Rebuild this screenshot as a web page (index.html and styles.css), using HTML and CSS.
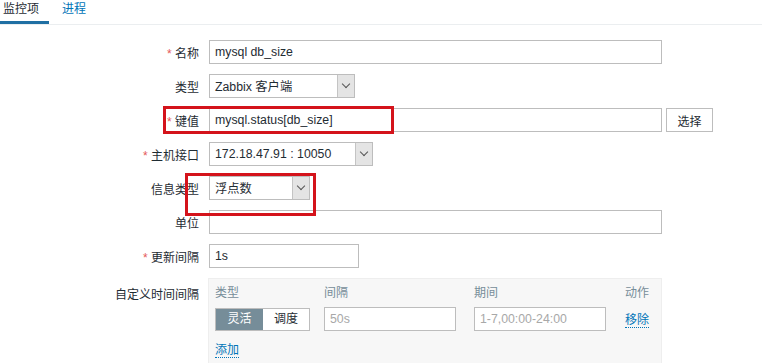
FILE: index.html
```html
<!DOCTYPE html>
<html lang="zh-CN">
<head>
    <meta charset="UTF-8">
    <title>监控项</title>
    <link rel="stylesheet" href="styles.css">
</head>
<body>
    <!-- Tabs -->
    <div class="tabs">
        <a class="tab active" href="#">监控项</a>
        <a class="tab" href="#">进程</a>
    </div>

    <div class="form">
        <div class="row">
            <label class="label"><span class="req">*</span> 名称</label>
            <input class="text wide" type="text" value="mysql db_size">
        </div>
        <div class="row">
            <label class="label">类型</label>
            <div class="select sel-type"><span>Zabbix 客户端</span><i class="arrow"></i></div>
        </div>
        <div class="row">
            <label class="label"><span class="req">*</span> 键值</label>
            <input class="text wide" type="text" value="mysql.status[db_size]">
            <button class="btn">选择</button>
        </div>
        <div class="row">
            <label class="label"><span class="req">*</span> 主机接口</label>
            <div class="select sel-iface"><span>172.18.47.91 : 10050</span><i class="arrow"></i></div>
        </div>
        <div class="row">
            <label class="label">信息类型</label>
            <div class="select sel-info"><span>浮点数</span><i class="arrow"></i></div>
        </div>
        <div class="row">
            <label class="label">单位</label>
            <input class="text wide" type="text" value="">
        </div>
        <div class="row">
            <label class="label"><span class="req">*</span> 更新间隔</label>
            <input class="text short" type="text" value="1s">
        </div>
        <div class="row top">
            <label class="label pad">自定义时间间隔</label>
            <div class="panel">
                <div class="grid">
                    <div class="head">类型</div>
                    <div class="head">间隔</div>
                    <div class="head">期间</div>
                    <div class="head">动作</div>

                    <div class="seg"><span class="on">灵活</span><span>调度</span></div>
                    <input class="text cell" type="text" placeholder="50s">
                    <input class="text cell" type="text" placeholder="1-7,00:00-24:00">
                    <a class="link" href="#">移除</a>
                </div>
                <a class="link add" href="#">添加</a>
            </div>
        </div>
    </div>

    <!-- red annotation boxes -->
    <div class="mark mark-key"></div>
    <div class="mark mark-info"></div>
</body>
</html>
```

FILE: styles.css
```css
body {
    margin: 0;
    font-family: "Liberation Sans", Arial, "Noto Sans CJK SC", sans-serif;
    font-size: 12px;
    color: #1f2c33;
    background: #ffffff;
    position: relative;
    height: 363px;
    overflow: hidden;
}

/* Tabs */
.tabs {
    display: flex;
    height: 24px;
    border-bottom: 1px solid #ebeef0;
}

.tab {
    display: block;
    height: 21px;
    line-height: 18px;
    padding: 0 5px 0 3px;
    margin-right: 10px;
    text-decoration: none;
    color: #0275b8;
    font-size: 12px;
}

.tab.active {
    width: 41px;
    color: #1f2c33;
    border-bottom: 3px solid #1f6fa3;
}

/* Form */
.form {
    padding-top: 15px;
    display: flex;
    flex-direction: column;
    gap: 10px;
}

.row {
    display: flex;
    align-items: center;
    height: 24px;
}

.row.top {
    align-items: flex-start;
    height: auto;
}

.label {
    width: 199px;
    margin-right: 10px;
    text-align: right;
    flex-shrink: 0;
}

.label.pad {
    padding-top: 7px;
}

.req {
    color: #e45959;
}

.text {
    box-sizing: border-box;
    height: 24px;
    border: 1px solid #bdbdbd;
    background: #fff;
    padding: 0 5px;
    font-family: inherit;
    font-size: 12.3px;
    color: #1f2c33;
    margin: 0;
}

.text::placeholder {
    color: #a8a8a8;
}

.wide {
    width: 453px;
}

.short {
    width: 150px;
}

.btn {
    box-sizing: border-box;
    margin-left: 4px;
    width: 47px;
    height: 24px;
    border: 1px solid #bdbdbd;
    background: #fff;
    font-family: inherit;
    font-size: 12px;
    color: #1f2c33;
    padding: 0;
}

/* Select boxes */
.select {
    box-sizing: border-box;
    height: 24px;
    border: 1px solid #bdbdbd;
    display: flex;
    align-items: center;
    justify-content: space-between;
    padding-left: 5px;
    font-size: 12.3px;
}

.sel-type { width: 146px; }
.sel-iface { width: 164px; }
.sel-info { width: 101px; }

.arrow {
    box-sizing: border-box;
    width: 17px;
    height: 22px;
    background: #e4e4e4;
    border-left: 1px solid #c4c4c4;
    position: relative;
}

.arrow::after {
    content: "";
    position: absolute;
    left: 5px;
    top: 6px;
    width: 5px;
    height: 5px;
    border-right: 1px solid #555;
    border-bottom: 1px solid #555;
    transform: rotate(45deg);
}

/* Custom intervals panel */
.panel {
    box-sizing: border-box;
    width: 454px;
    height: 100px;
    margin-left: -1px;
    background: #f7f7f7;
    border: 1px solid #eeeeee;
    padding: 6px 0 0 6px;
}

.grid {
    display: grid;
    grid-template-columns: 109px 150px 151px auto;
    row-gap: 6px;
    align-items: center;
}

.head {
    color: #768d99;
    height: 16px;
    line-height: 16px;
}

.seg {
    display: flex;
    width: 95px;
    height: 23px;
    box-sizing: border-box;
    border: 1px solid #bdbdbd;
    background: #fff;
}

.seg span {
    flex: 1;
    text-align: center;
    line-height: 21px;
}

.seg .on {
    background: #768d99;
    color: #fff;
    flex: 0 0 47px;
}

.cell {
    width: 132px;
    height: 24px;
}

.link {
    color: #0275b8;
    text-decoration: none;
    border-bottom: 1px dotted #0275b8;
    justify-self: start;
}

.add {
    display: inline-block;
    margin-top: 9px;
}

/* Red annotation boxes */
.mark {
    position: absolute;
    border: 3px solid #d4131b;
    box-sizing: border-box;
}

.mark-key {
    left: 163px;
    top: 106px;
    width: 231px;
    height: 28px;
}

.mark-info {
    left: 185px;
    top: 173px;
    width: 131px;
    height: 43px;
}
```
